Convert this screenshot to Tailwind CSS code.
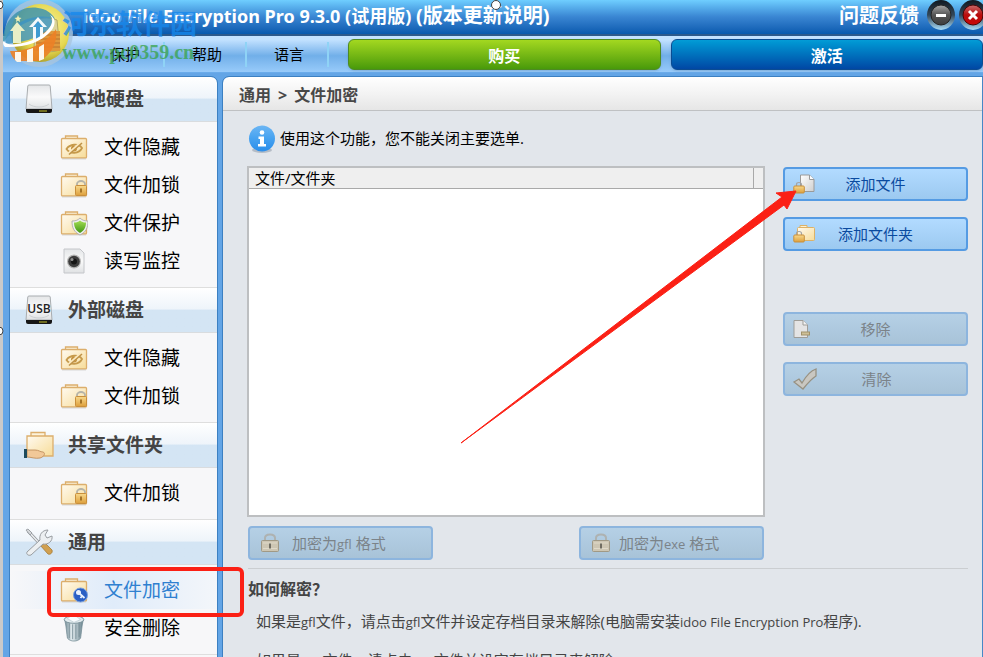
<!DOCTYPE html>
<html lang="zh-CN">
   <head>
      <meta charset="UTF-8" />
      <meta name="viewport" content="width=device-width, initial-scale=1.0" />
      <script src="https://cdn.jsdelivr.net/npm/@tailwindcss/browser@4"></script>
      <title>idoo File Encryption Pro</title>
   </head>

   <body
      class="relative h-screen overflow-hidden flex flex-col bg-[#c9c9c9] pl-[3px] font-['Open_Sans','Noto_Sans_CJK_SC',sans-serif] text-[15px] text-black"
   >
      <!-- Shared icons -->
      <svg class="absolute size-0">
         <defs>
            <linearGradient id="gFolder" x1="0" y1="0" x2="1" y2="1">
               <stop offset="0" stop-color="#fffaf0" />
               <stop offset="1" stop-color="#f7dc98" />
            </linearGradient>
            <linearGradient id="gGold" x1="0" y1="0" x2="0" y2="1">
               <stop offset="0" stop-color="#f8d98c" />
               <stop offset="1" stop-color="#dd9f3c" />
            </linearGradient>
            <linearGradient id="gDisk" x1="0" y1="0" x2="0" y2="1">
               <stop offset="0" stop-color="#e4e6e8" />
               <stop offset="0.5" stop-color="#fafafa" />
               <stop offset="1" stop-color="#dfe1e3" />
            </linearGradient>
            <linearGradient id="gPage" x1="0" y1="0" x2="1" y2="1">
               <stop offset="0" stop-color="#ffffff" />
               <stop offset="1" stop-color="#cfcfcf" />
            </linearGradient>
            <linearGradient id="gInfo" x1="0" y1="0" x2="0" y2="1">
               <stop offset="0" stop-color="#6cb6f4" />
               <stop offset="0.5" stop-color="#46a2f0" />
               <stop offset="1" stop-color="#2b8eea" />
            </linearGradient>
            <linearGradient id="gShield" x1="0" y1="0" x2="0" y2="1">
               <stop offset="0" stop-color="#a5de55" />
               <stop offset="1" stop-color="#3f9612" />
            </linearGradient>
            <linearGradient id="gBin" x1="0" y1="0" x2="1" y2="0">
               <stop offset="0" stop-color="#6d8792" />
               <stop offset="0.4" stop-color="#e8f0f3" />
               <stop offset="1" stop-color="#65808b" />
            </linearGradient>
            <radialGradient id="gOrb" cx="0.6" cy="0.4" r="0.6">
               <stop offset="0" stop-color="#fdf5a0" />
               <stop offset="0.7" stop-color="#e6d850" />
               <stop offset="1" stop-color="#b3a52c" />
            </radialGradient>
            <linearGradient id="gRing" x1="0" y1="0" x2="0" y2="1">
               <stop offset="0" stop-color="#101820" />
               <stop offset="0.5" stop-color="#33485a" />
               <stop offset="1" stop-color="#a8dcf8" />
            </linearGradient>
            <linearGradient id="gGrey" x1="0" y1="0" x2="0" y2="1">
               <stop offset="0" stop-color="#a8a8a8" />
               <stop offset="0.5" stop-color="#555555" />
               <stop offset="1" stop-color="#3c3c3c" />
            </linearGradient>
            <linearGradient id="gRed" x1="0" y1="0" x2="0" y2="1">
               <stop offset="0" stop-color="#c66a6a" />
               <stop offset="0.5" stop-color="#b80c0c" />
               <stop offset="1" stop-color="#c80808" />
            </linearGradient>
         </defs>
         <symbol id="folder" viewBox="0 0 28 26">
            <path d="M5.500 4.500V2h12v2.500" fill="#fdf3dc" stroke="#dcae6c" stroke-width="1.300" />
            <rect x="1.500" y="4.500" width="25" height="19.500" rx="1" fill="url(#gFolder)" stroke="#dcae6c" stroke-width="1.300" />
            <path d="M2 25h24" stroke="#cfcfcf" stroke-width="0.800" />
         </symbol>
         <symbol id="folder-hide" viewBox="0 0 28 26">
            <use href="#folder" width="28" height="26" />
            <path d="M6.500 15c3-5 12-6 15.500-1-3 6-12 6.500-15.500 1z" fill="none" stroke="#c69a4b" stroke-width="1.800" />
            <circle cx="14" cy="14.500" r="3" fill="#c4923f" />
            <path d="M8 20 21 8.500" stroke="#fbe9c0" stroke-width="2.500" />
            <path d="M9 20.500 22 9" stroke="#bf9145" stroke-width="1.500" />
         </symbol>
         <symbol id="folder-lock" viewBox="0 0 28 26">
            <use href="#folder" width="28" height="26" />
            <path d="M17 14v-2a4 3 0 0 1 8 0v2" fill="none" stroke="#b5b3a8" stroke-width="1.800" />
            <rect x="15.500" y="13.500" width="11" height="10" rx="1" fill="url(#gGold)" stroke="#c98f3b" />
            <path d="M21 16.500v4" stroke="#8c5c14" stroke-width="1.500" />
         </symbol>
         <symbol id="folder-shield" viewBox="0 0 28 26">
            <use href="#folder" width="28" height="26" />
            <path d="M12 11c4 0 6-1 8-3 2 2 4 3 8 3 0 7-2 11-8 14-6-3-8-7-8-14z" fill="#efefef" stroke="#a6a6a6" stroke-width="0.800" />
            <path d="M14 12.500c3 0 4-.5 6-2 2 1.500 3 2 6 2 0 5-2 8-6 10.500-4-2.500-6-5.500-6-10.500z" fill="url(#gShield)" />
         </symbol>
         <symbol id="folder-key" viewBox="0 0 28 26">
            <use href="#folder" width="28" height="26" />
            <circle cx="20.500" cy="18" r="7" fill="#2a5fc4" stroke="#7ba2e0" />
            <circle cx="18.500" cy="15.500" r="2.500" fill="#e9f2ff" />
            <path d="m19.500 16.500 5 4.500M22 19l-1.500 2" stroke="#e9f2ff" stroke-width="1.800" />
         </symbol>
         <symbol id="camera" viewBox="0 0 28 26">
            <path d="M4 1h16l4 4v20H4z" fill="url(#gDisk)" stroke="#c4c6ca" stroke-width="1" />
            <circle cx="14" cy="13.500" r="7" fill="#b4b4b4" />
            <circle cx="14" cy="13.500" r="5.800" fill="#3c3c3c" />
            <circle cx="14" cy="13.500" r="3" fill="#161616" />
            <circle cx="12" cy="11.500" r="1.500" fill="#8f8f8f" />
         </symbol>
         <symbol id="bin" viewBox="0 0 28 30">
            <path d="M4 6c2 8 2 15 3 20 3 4 11 4 14 0 1-5 1-12 3-20z" fill="url(#gBin)" stroke="#738b95" stroke-width="0.800" />
            <path d="M9 10v16M12.500 11v16M16 11v16M19.500 10v15" stroke="#718891" stroke-width="1.300" opacity="0.700" />
            <ellipse cx="14" cy="6" rx="10.500" ry="4" fill="#e2ebee" stroke="#78909a" />
            <path d="m7 5 5-4 5 2 4 3-7 3z" fill="#fafdff" stroke="#a9bfc8" stroke-width="0.600" />
         </symbol>
         <symbol id="disk" viewBox="0 0 28 30">
            <path d="M4 1h20q1 0 1.200 1L27 25H1L2.800 2Q3 1 4 1z" fill="url(#gDisk)" stroke="#a9adb0" stroke-width="1" />
            <path d="M1 25h26v2q0 2-2 2H3q-2 0-2-2z" fill="#161616" />
            <path d="M14 27h8" stroke="#8d8a24" stroke-width="1.500" />
            <path d="M4 20c5 4 15 4 20 0" fill="none" stroke="#ccd0d3" stroke-width="1" />
         </symbol>
         <symbol id="share" viewBox="0 0 32 30">
            <path d="M8 6V2.500h14V6" fill="#fdf3dc" stroke="#dcae6c" stroke-width="1.300" />
            <path d="M4 6h26v20H4z" fill="url(#gFolder)" stroke="#dcae6c" stroke-width="1.300" />
            <path d="M4 20h8c4 0 5 2 8 2 3 1 1 5-3 6-5 1-9-1-13-1z" fill="#f1c898" stroke="#bf8e5c" stroke-width="0.900" />
            <path d="M1 19h3v9H1z" fill="#1e4a5c" />
         </symbol>
         <symbol id="tools" viewBox="0 0 28 28">
            <path d="m3 3 13 14" stroke="#8f9499" stroke-width="3" />
            <path d="m3 3 13 14" stroke="#eceef0" stroke-width="1.500" />
            <path d="m1 2 2-1 4 4-2 2z" fill="#d6d9dc" stroke="#8f9499" stroke-width="0.800" />
            <path d="m15 17 4-3 8 8c1 3-2 5-4 4z" fill="#d1a050" stroke="#a57a34" stroke-width="0.800" />
            <path d="M2 24 15 12c-1-5 2-10 8-10l-3 5 2 3 5-2c1 5-4 9-9 8L6 27c-3 1-5-1-4-3z" fill="#eceff1" stroke="#999da1" stroke-width="1" />
         </symbol>
         <symbol id="padlock" viewBox="0 0 20 20">
            <path d="M5 8V5q0-3.500 5-3.500T15 5v3" fill="none" stroke="#aeb2b1" stroke-width="2" />
            <rect x="1.500" y="7.500" width="17" height="11" rx="1" fill="#cdc6b3" stroke="#a09985" />
            <path d="M3 10h14M3 15.500h14" stroke="#e0dac9" />
            <path d="M10 10.500v5" stroke="#59574e" stroke-width="1.600" />
         </symbol>
         <symbol id="add-file" viewBox="0 0 22 20">
            <path d="M7.500 1h9l4.500 4.500V17.500H7.500z" fill="url(#gPage)" stroke="#9a9a9a" />
            <path d="M16.500 1v4.500H21" fill="#fff" stroke="#9a9a9a" />
            <path d="M3.500 12v-1.500q0-2 2.500-2t2.500 2V12" fill="none" stroke="#a3a3a3" stroke-width="1.200" />
            <rect x="0.800" y="12" width="10.500" height="7" rx="1" fill="url(#gGold)" stroke="#c98f3b" />
         </symbol>
         <symbol id="add-folder" viewBox="0 0 22 20">
            <path d="M7 4V1.500h7V4" fill="#fdf0cf" stroke="#dcb268" />
            <rect x="4.500" y="3.500" width="17" height="13" rx="1" fill="url(#gFolder)" stroke="#dcb268" />
            <path d="M3.500 12V9.500q0-2 2.500-2t2.500 2V12" fill="none" stroke="#a3a3a3" stroke-width="1.200" />
            <rect x="0.800" y="11" width="10.500" height="7" rx="1" fill="url(#gGold)" stroke="#c98f3b" />
         </symbol>
         <symbol id="remove" viewBox="0 0 22 20">
            <path d="M1 1.500h9l4.500 4.500V18.500H1z" fill="#e4e4e4" stroke="#9e9d98" />
            <path d="M10 1.500V6h4.500" fill="#f4f4f4" stroke="#9e9d98" />
            <rect x="8.500" y="13" width="8" height="3" fill="#cdbf96" stroke="#a0916a" />
         </symbol>
         <symbol id="check" viewBox="0 0 24 22">
            <path d="m1 14 5-3 3 4C13 8 17 3 23 1v7c-5 3-9 8-13 13z" fill="#c9c7c1" stroke="#979182" stroke-width="1.300" />
         </symbol>
      </svg>

      <!-- Title bar -->
      <header
         class="h-[36px] shrink-0 flex items-start pl-20 bg-linear-to-b from-[#6fceff] via-[#3985d2] to-[#075aae] border-b-2 border-[#2d5a8c] text-white text-[20px] leading-8 font-bold font-['Noto_Sans','Noto_Sans_CJK_SC',sans-serif] whitespace-nowrap"
      >
         <h1 class="text-[18px]">idoo File Encryption Pro 9.3.0 (试用版)&nbsp;</h1>
         <a href="#">(版本更新说明)</a>
         <a href="#" class="ml-auto mr-2">问题反馈</a>
         <button aria-label="最小化" class="mr-1">
            <svg class="w-7 h-[30px]" viewBox="0 0 28 30">
               <ellipse cx="14" cy="15" rx="14" ry="15" fill="url(#gRing)" />
               <circle cx="14" cy="15" r="10" fill="url(#gGrey)" stroke="#252525" />
               <path d="M9 15.500h10" stroke="#fff" stroke-width="3" />
            </svg>
         </button>
         <button aria-label="关闭" class="-mr-1">
            <svg class="w-7 h-[30px]" viewBox="0 0 28 30">
               <ellipse cx="14" cy="15" rx="14" ry="15" fill="url(#gRing)" />
               <circle cx="14" cy="15" r="10" fill="url(#gRed)" stroke="#4c0505" />
               <path d="m10 11 8 8M18 11l-8 8" stroke="#fff" stroke-width="3" />
            </svg>
         </button>
      </header>

      <!-- Menu -->
      <nav
         class="h-[37px] shrink-0 flex items-center pl-20 bg-linear-to-b from-[#c3e2ff] from-10% via-[#71afe9] via-55% to-[#98cbfa] border-b border-[#6aabea]"
      >
         <button class="w-[82px] h-[25px] pl-1 border-r-2 border-[#8fd3f6]">保护</button>
         <button class="w-[82px] h-[25px] pl-1 border-r-2 border-[#8fd3f6]">帮助</button>
         <button class="w-[82px] h-[25px] pl-1 border-r-2 border-[#8fd3f6]">语言</button>
         <button
            class="flex-1 h-[31px] ml-[19px] pt-1 rounded-md border border-[#4d8a24] bg-linear-to-b from-[#a3d820] to-[#489a0a] text-[16px] leading-6 font-bold text-white shadow-sm"
         >
            购买
         </button>
         <button
            class="flex-1 h-[31px] ml-[10px] pt-1 rounded-md border border-[#0b4c92] bg-linear-to-b from-[#049cd6] to-[#0147a4] text-[16px] leading-6 font-bold text-white shadow-sm"
         >
            激活
         </button>
      </nav>

      <div class="flex-1 min-h-0 flex pt-1 pl-[7px] gap-[6px] bg-[#63a5e6]">
         <!-- Sidebar -->
         <aside
            class="w-[207px] shrink-0 overflow-hidden rounded-t-md bg-[#f7f7f9] outline outline-[#3c80c2]"
         >
            <section>
               <h2 class="h-[45px] flex items-center pl-3 gap-3 border-b border-[#d9dcdf] bg-linear-to-b from-white via-[#eef4fa] via-48% to-[#d4e5f4] to-50% text-[19px] font-bold text-[#444]">
                  <svg class="w-[34px] h-[30px]"><use href="#disk" /></svg>
                  本地硬盘
               </h2>
               <ul class="pt-1.5 pb-[7px] border-b border-[#dedede] text-[19px]">
                  <li><a href="#" class="h-[38px] flex items-center pl-[50px] gap-4"><svg class="w-[28px] h-[26px]"><use href="#folder-hide" /></svg>文件隐藏</a></li>
                  <li><a href="#" class="h-[38px] flex items-center pl-[50px] gap-4"><svg class="w-[28px] h-[26px]"><use href="#folder-lock" /></svg>文件加锁</a></li>
                  <li><a href="#" class="h-[38px] flex items-center pl-[50px] gap-4"><svg class="w-[28px] h-[26px]"><use href="#folder-shield" /></svg>文件保护</a></li>
                  <li><a href="#" class="h-[38px] flex items-center pl-[50px] gap-4"><svg class="w-[28px] h-[26px]"><use href="#camera" /></svg>读写监控</a></li>
               </ul>
            </section>

            <section>
               <h2 class="h-[45px] flex items-center pl-3 gap-3 border-b border-[#d9dcdf] bg-linear-to-b from-white via-[#eef4fa] via-48% to-[#d4e5f4] to-50% text-[19px] font-bold text-[#444]">
                  <svg class="w-[34px] h-[30px]">
                     <use href="#disk" />
                     <text x="17" y="18" text-anchor="middle" class="text-[12px] font-semibold" fill="#222">USB</text>
                  </svg>
                  外部磁盘
               </h2>
               <ul class="pt-1.5 pb-[7px] border-b border-[#dedede] text-[19px]">
                  <li><a href="#" class="h-[38px] flex items-center pl-[50px] gap-4"><svg class="w-[28px] h-[26px]"><use href="#folder-hide" /></svg>文件隐藏</a></li>
                  <li><a href="#" class="h-[38px] flex items-center pl-[50px] gap-4"><svg class="w-[28px] h-[26px]"><use href="#folder-lock" /></svg>文件加锁</a></li>
               </ul>
            </section>

            <section>
               <h2 class="h-[45px] flex items-center pl-3 gap-3 border-b border-[#d9dcdf] bg-linear-to-b from-white via-[#eef4fa] via-48% to-[#d4e5f4] to-50% text-[19px] font-bold text-[#444]">
                  <svg class="w-[34px] h-[30px]"><use href="#share" /></svg>
                  共享文件夹
               </h2>
               <ul class="pt-1.5 pb-[7px] border-b border-[#dedede] text-[19px]">
                  <li><a href="#" class="h-[38px] flex items-center pl-[50px] gap-4"><svg class="w-[28px] h-[26px]"><use href="#folder-lock" /></svg>文件加锁</a></li>
               </ul>
            </section>

            <section>
               <h2 class="h-[45px] flex items-center pl-3 gap-3 border-b border-[#d9dcdf] bg-linear-to-b from-white via-[#eef4fa] via-48% to-[#d4e5f4] to-50% text-[19px] font-bold text-[#444]">
                  <svg class="w-[34px] h-[28px]"><use href="#tools" /></svg>
                  通用
               </h2>
               <ul class="pt-1.5 pb-[7px] border-b border-[#dedede] text-[19px]">
                  <li><a href="#" class="h-[38px] flex items-center pl-[50px] gap-4 bg-linear-to-r from-[#f7f7f9] via-[#e0ecfa] to-[#f3f6fa] text-[#2f80d0]"><svg class="w-[28px] h-[26px]"><use href="#folder-key" /></svg>文件加密</a></li>
                  <li><a href="#" class="h-[38px] flex items-center pl-[50px] gap-4"><svg class="w-[28px] h-[28px]"><use href="#bin" /></svg>安全删除</a></li>
               </ul>
            </section>
         </aside>

         <!-- Main Content -->
         <main
            class="flex-1 min-w-0 overflow-hidden rounded-tl-md bg-[#e2e6eb] border-r border-[#4787c6] outline outline-[#3c80c2]"
         >
            <h2
               class="h-[34px] flex items-center gap-[7px] px-4 pt-0.5 border-b border-[#bfc1c3] bg-linear-to-b from-white via-[#f3f3f3] via-50% to-[#e6e6e6] text-[16px] font-bold text-[#484848]"
            >
               <span>通用</span><span>&gt;</span><span>文件加密</span>
            </h2>

            <p class="h-[55px] flex items-center gap-1 pl-[25px]">
               <svg class="size-[28px]" viewBox="0 0 28 28">
                  <ellipse cx="14" cy="25" rx="10" ry="3" fill="#b4bcc6" />
                  <circle cx="14" cy="13.500" r="13" fill="url(#gInfo)" />
                  <circle cx="14" cy="7.500" r="2.300" fill="#fff" />
                  <path d="M10.500 11.500h5.500v7.500h2v2.500h-8V19h2v-5h-1.500z" fill="#fff" />
               </svg>
               使用这个功能，您不能关闭主要选单.
            </p>

            <div class="flex gap-[18px] pl-6 pr-[14px]">
               <div class="flex-1 min-w-0">
                  <div class="h-[351px] border-2 border-[#bdbfc1] bg-white">
                     <table class="w-full border-collapse bg-[#efefef]">
                        <thead>
                           <tr class="h-5 border-b border-[#a9a9a9]">
                              <th class="h-5 pl-1.5 text-left font-normal leading-5 border-r border-[#a9a9a9]">文件/文件夹</th>
                              <th class="w-[10px]"></th>
                           </tr>
                        </thead>
                     </table>
                  </div>
                  <div class="flex justify-between px-px pt-[9px]">
                     <button disabled class="w-[185px] h-[34px] flex items-center gap-[12px] pl-[10px] rounded-sm border-2 border-[#8db5de] bg-linear-to-b from-[#b5d0e6] to-[#a8c3d8] text-[#7b8389]">
                        <svg class="size-5"><use href="#padlock" /></svg>
                        <span>加密为<span class="text-[13px]">gfl</span> 格式</span>
                     </button>
                     <button disabled class="w-[185px] h-[34px] flex items-center gap-[8px] pl-[10px] rounded-sm border-2 border-[#8db5de] bg-linear-to-b from-[#b5d0e6] to-[#a8c3d8] text-[#7b8389]">
                        <svg class="size-5"><use href="#padlock" /></svg>
                        <span>加密为<span class="text-[13px]">exe</span> 格式</span>
                     </button>
                  </div>
               </div>

               <div class="w-[185px] pt-px flex flex-col gap-4">
                  <button class="h-[34px] flex items-center pl-2 pr-[30px] rounded-sm border-2 border-[#559be3] bg-linear-to-b from-[#b2dbff] to-[#9cc9f0] text-[#0a4a9f]">
                     <svg class="w-[22px] h-5"><use href="#add-file" /></svg>
                     <span class="flex-1">添加文件</span>
                  </button>
                  <button class="h-[34px] flex items-center pl-2 pr-[30px] rounded-sm border-2 border-[#559be3] bg-linear-to-b from-[#b2dbff] to-[#9cc9f0] text-[#0a4a9f]">
                     <svg class="w-[22px] h-5"><use href="#add-folder" /></svg>
                     <span class="flex-1">添加文件夹</span>
                  </button>
                  <button disabled class="h-[34px] mt-[45px] flex items-center pl-2 pr-[30px] rounded-sm border-2 border-[#8db5de] bg-linear-to-b from-[#b5d0e6] to-[#a8c3d8] text-[#7b8389]">
                     <svg class="w-[22px] h-5"><use href="#remove" /></svg>
                     <span class="flex-1">移除</span>
                  </button>
                  <button disabled class="h-[34px] flex items-center pl-2 pr-[30px] rounded-sm border-2 border-[#8db5de] bg-linear-to-b from-[#b5d0e6] to-[#a8c3d8] text-[#7b8389]">
                     <svg class="w-[24px] h-[22px]"><use href="#check" /></svg>
                     <span class="flex-1">清除</span>
                  </button>
               </div>
            </div>

            <!-- Help -->
            <section class="mt-2 ml-[25px] mr-[14px] text-[#444] whitespace-nowrap">
               <hr class="border-[#cbced1]" />
               <h3 class="pt-2 leading-6 text-[16px] font-bold">如何解密？</h3>
               <p class="pt-2 pl-2 leading-6">如果是<span class="text-[13px]">gfl</span>文件，请点击<span class="text-[13px]">gfl</span>文件并设定存档目录来解除(电脑需安装<span class="text-[13px]">idoo File Encryption Pro</span>程序).</p>
               <p class="pt-[14px] pl-2 leading-6">如果是<span class="text-[13px]">exe</span>文件，请点击<span class="text-[13px]">exe</span>文件并设定存档目录来解除.</p>
            </section>
         </main>
      </div>

      <!-- Logo and site mark -->
      <div class="absolute left-0 top-0 flex pointer-events-none whitespace-nowrap">
         <svg class="w-[74px] h-[68px]" viewBox="0 0 74 68">
            <circle cx="39" cy="33" r="34" fill="#a9c6de" opacity="0.800" />
            <circle cx="40" cy="33" r="29" fill="url(#gOrb)" />
            <!-- drive behind the mark -->
            <path d="M35 20q12-4 22 0l3 30q-12 4-26 0z" fill="#dcd49a" stroke="#a39a58" stroke-width="0.800" />
            <path d="M36 31h24v20H36z" fill="#e0993c" />
            <path d="M36 35h24M36 39h24M36 43h24M36 47h24" stroke="#b8732c" stroke-width="1" />
            <!-- upper half -->
            <path d="M3 38C5 18 20 5 38 8c8 1 14 5 17 11-10-4-40 2-52 25z" fill="#3f94ae" opacity="0.850" />
            <path d="M5 40C10 24 30 14 50 17c8 8-8 24-44 27z" fill="#3c93c4" opacity="0.800" />
            <path d="m18 15 1 2.500 2.500.5-2 1.500.5 2.500-2-1.500-2 1.500.5-2.500-2-1.500 2.500-.5z" fill="#f3f1b4" />
            <path d="M10 31 17 22l8 9h-4v12h-8V31z" fill="#e9efc6" />
            <path d="m29 27 9-10 9 10h-4v11l-10 4V27z" fill="#f4f8fa" />
            <path d="m33 27 5-6 5 6h-3v12l-4 1V27z" fill="#3e9bd2" />
            <!-- lower half -->
            <path d="M10 51C28 52 48 42 56 29c2 12-4 26-17 32H16c-3-3-5-6-6-10z" fill="#ec8126" opacity="0.900" />
            <path d="M15 52h6v10h-4l-2-2zM27 50l6-2v14h-6zM39 47l5-3v15l-5 2z" fill="#fdf6ea" />
            <path d="M50 15c6 3 6 10 1 16-9 11-27 17-46 16-2-2-2-4-2-6 3 3 8 4 13 3 15-1 29-9 34-17 3-5 3-9 0-12z" fill="#fff" />
         </svg>
         <div class="-ml-3 pt-2 opacity-75">
            <p class="text-[27px] leading-8 font-bold text-[#1689ee]">河东软件园</p>
            <p class="font-['Liberation_Serif',serif] text-[20px] leading-6 font-bold text-[#38a34a]">www.pc0359.cn</p>
         </div>
      </div>

      <!-- Marks over the window -->
      <div class="absolute left-[47px] top-[567px] w-[197px] h-[50px] rounded-md border-4 border-[#fb2015] pointer-events-none"></div>
      <svg class="absolute left-[450px] top-[180px] w-[360px] h-[270px] pointer-events-none" viewBox="0 0 360 270">
         <path d="M11 263 332 17l-6-4 20-2-9 18-3-4z" fill="#fb2015" stroke="#fb2015" stroke-linejoin="round" />
      </svg>
      <svg class="absolute left-[490px] top-0 size-3 pointer-events-none" viewBox="0 0 12 12">
         <circle cx="6" cy="5" r="4.500" fill="#fff" stroke="#444" />
      </svg>
      <svg class="absolute left-0 top-0 w-1.5 h-3 pointer-events-none" viewBox="0 0 6 12">
         <circle cx="-1" cy="5" r="4" fill="#fff" stroke="#444" />
      </svg>
      <svg class="absolute left-0 top-[325px] w-1.5 h-3 pointer-events-none" viewBox="0 0 6 12">
         <circle cx="-1" cy="6" r="4" fill="#fff" stroke="#444" />
      </svg>
   </body>
</html>
